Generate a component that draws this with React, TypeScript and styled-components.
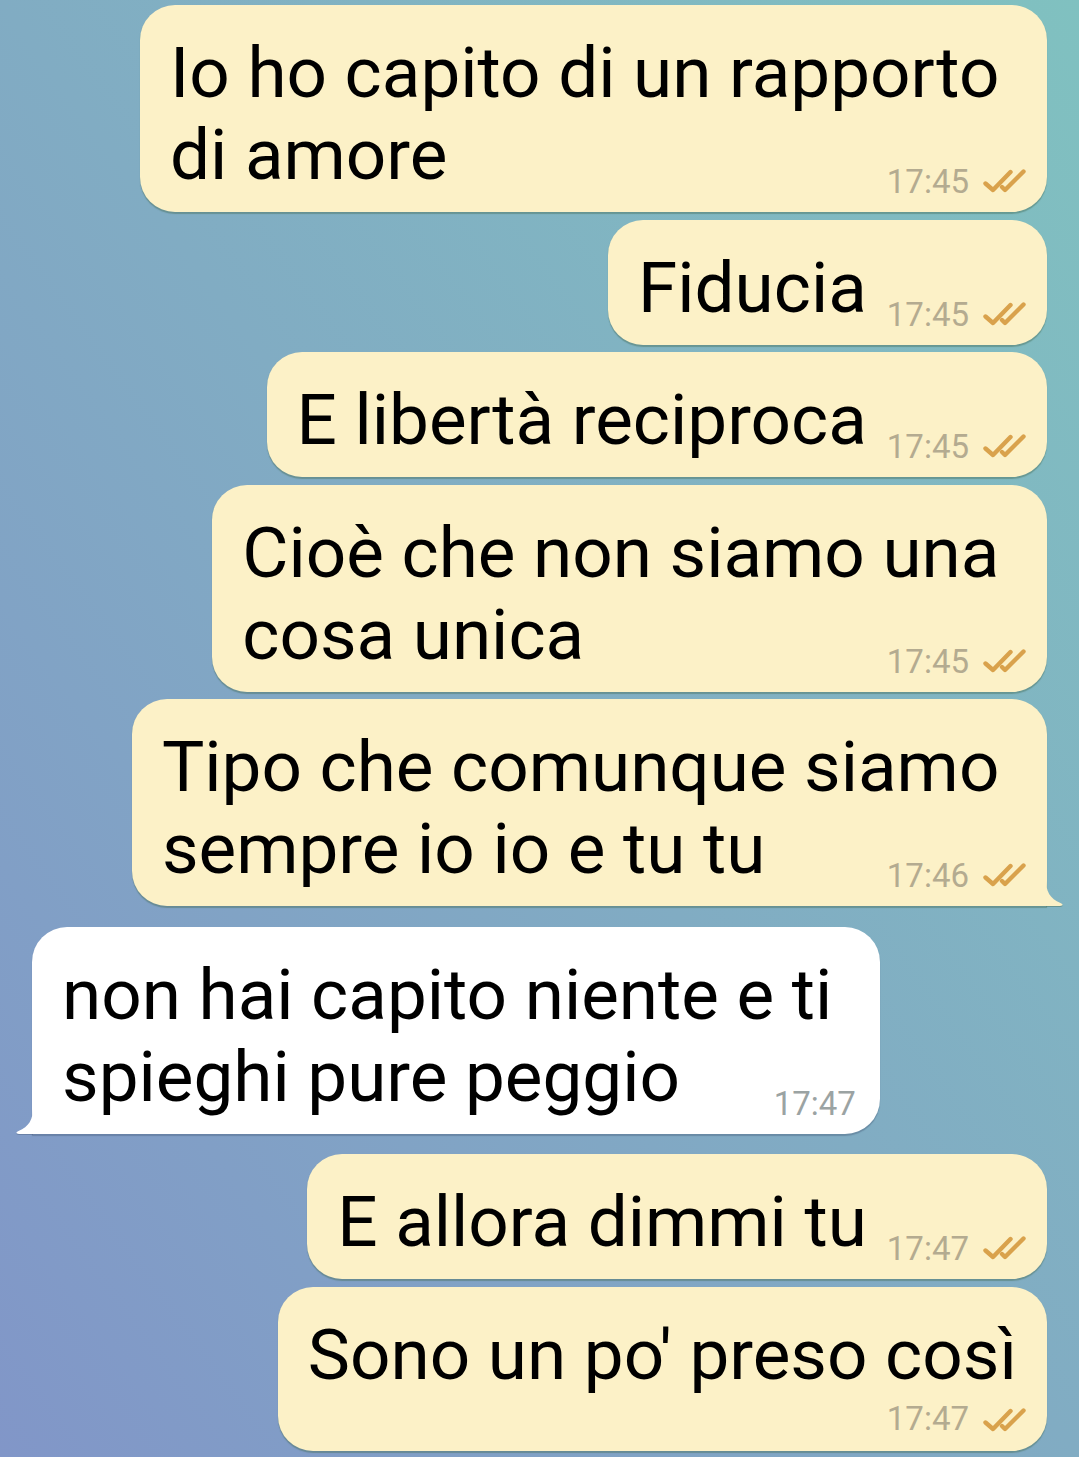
import React from "react";
import styled, { createGlobalStyle, css } from "styled-components";

const Global = createGlobalStyle`
  html, body { margin: 0; padding: 0; }
  body {
    width: 1079px;
    height: 1457px;
    overflow: hidden;
    font-family: Roboto, "Noto Sans", sans-serif;
  }
`;

const Chat = styled.div`
  box-sizing: border-box;
  width: 1079px;
  height: 1457px;
  padding: 5px 32px 0 32px;
  display: flex;
  flex-direction: column;
  background: linear-gradient(to bottom left, #80c1c0 0%, #81acc3 50%, #8196c8 100%);
`;

const Group = styled.div`
  display: flex;
  flex-direction: column;
  gap: 7.5px;
  & + & {
    margin-top: 20.5px;
  }
`;

const Bubble = styled.div<{ $out: boolean; $tail?: boolean }>`
  position: relative;
  display: flow-root;
  box-sizing: border-box;
  align-self: ${(p) => (p.$out ? "flex-end" : "flex-start")};
  max-width: 930px;
  padding: 27px 30px 10px 30px;
  border-radius: 35px;
  background: ${(p) => (p.$out ? "#fcf1c7" : "#ffffff")};
  box-shadow: 0 1.5px 1px ${(p) => (p.$out ? "rgba(70, 110, 90, 0.45)" : "rgba(60, 80, 110, 0.35)")};
  ${(p) =>
    p.$tail &&
    (p.$out
      ? css`border-bottom-right-radius: 0;`
      : css`border-bottom-left-radius: 0;`)}
`;

const Text = styled.div`
  font-family: Roboto, "Noto Sans", sans-serif;
  font-size: 71px;
  line-height: 82px;
  color: #000;
  white-space: pre;
`;

const Meta = styled.span<{ $out: boolean; $stacked?: boolean }>`
  display: flex;
  align-items: flex-end;
  justify-content: flex-end;
  gap: 13px;
  font-family: Roboto, "Noto Sans", sans-serif;
  font-size: 33px;
  line-height: 40px;
  white-space: nowrap;
  color: ${(p) => (p.$out ? "#b4ab90" : "#9ba3a3")};
  ${(p) =>
    p.$stacked
      ? css`
          float: none;
          line-height: 45px;
          margin-right: -10px;
        `
      : css`
          float: right;
          height: 88px;
          margin: 0 ${p.$out ? "-10px" : "-6px"} 0 20px;
        `}
`;

const Checks = styled.svg`
  width: 45px;
  height: 25px;
  margin-bottom: 9px;
  flex-shrink: 0;
`;

const Tail = styled.svg<{ $out: boolean }>`
  position: absolute;
  bottom: 0;
  width: 18px;
  height: 26px;
  ${(p) =>
    p.$out
      ? css`right: -17px;`
      : css`left: -17px; transform: scaleX(-1);`}
  filter: drop-shadow(0 1.5px 0.5px ${(p) => (p.$out ? "rgba(70, 110, 90, 0.45)" : "rgba(60, 80, 110, 0.35)")});
`;

type Msg = {
  lines: string[];
  time: string;
  out: boolean;
  tail?: boolean;
  stacked?: boolean;
};

const groups: Msg[][] = [
  [
    { lines: ["Io ho capito di un rapporto ", "di amore"], time: "17:45", out: true },
    { lines: ["Fiducia"], time: "17:45", out: true },
    { lines: ["E libertà reciproca"], time: "17:45", out: true },
    { lines: ["Cioè che non siamo una ", "cosa unica"], time: "17:45", out: true },
    { lines: ["Tipo che comunque siamo ", "sempre io io e tu tu"], time: "17:46", out: true, tail: true },
  ],
  [
    { lines: ["non hai capito niente e ti ", "spieghi pure peggio"], time: "17:47", out: false, tail: true },
  ],
  [
    { lines: ["E allora dimmi tu"], time: "17:47", out: true },
    { lines: ["Sono un po' preso così"], time: "17:47", out: true, stacked: true },
  ],
];

const DoubleCheck = () => (
  <Checks viewBox="0 0 45 25">
    <g fill="none" stroke="#d9a24c" strokeWidth="4.4" strokeLinecap="round" strokeLinejoin="round">
      <path d="M3.5 15.5 L11 22 L28.5 4" />
      <path d="M20 19 L23 22 L41.5 3.5" />
    </g>
  </Checks>
);

const BubbleTail = ({ out }: { out: boolean }) => (
  <Tail $out={out} viewBox="0 0 18 26">
    <path
      d="M0 0 C0 11 4 19 14.5 23 C17.5 24.2 17 26 14 26 L0 26 Z"
      fill={out ? "#fcf1c7" : "#ffffff"}
    />
  </Tail>
);

const Message = ({ m }: { m: Msg }) => {
  const meta = (
    <Meta $out={m.out} $stacked={m.stacked}>
      <span>{m.time}</span>
      {m.out && <DoubleCheck />}
    </Meta>
  );
  return (
    <Bubble $out={m.out} $tail={m.tail}>
      <Text>
        {m.lines.map((l, i) => (
          <React.Fragment key={i}>
            {i > 0 && <br />}
            {l}
          </React.Fragment>
        ))}
        {!m.stacked && meta}
      </Text>
      {m.stacked && meta}
      {m.tail && <BubbleTail out={m.out} />}
    </Bubble>
  );
};

export default function App() {
  return (
    <>
      <Global />
      <Chat>
        {groups.map((g, gi) => (
          <Group key={gi}>
            {g.map((m, mi) => (
              <Message key={mi} m={m} />
            ))}
          </Group>
        ))}
      </Chat>
    </>
  );
}
